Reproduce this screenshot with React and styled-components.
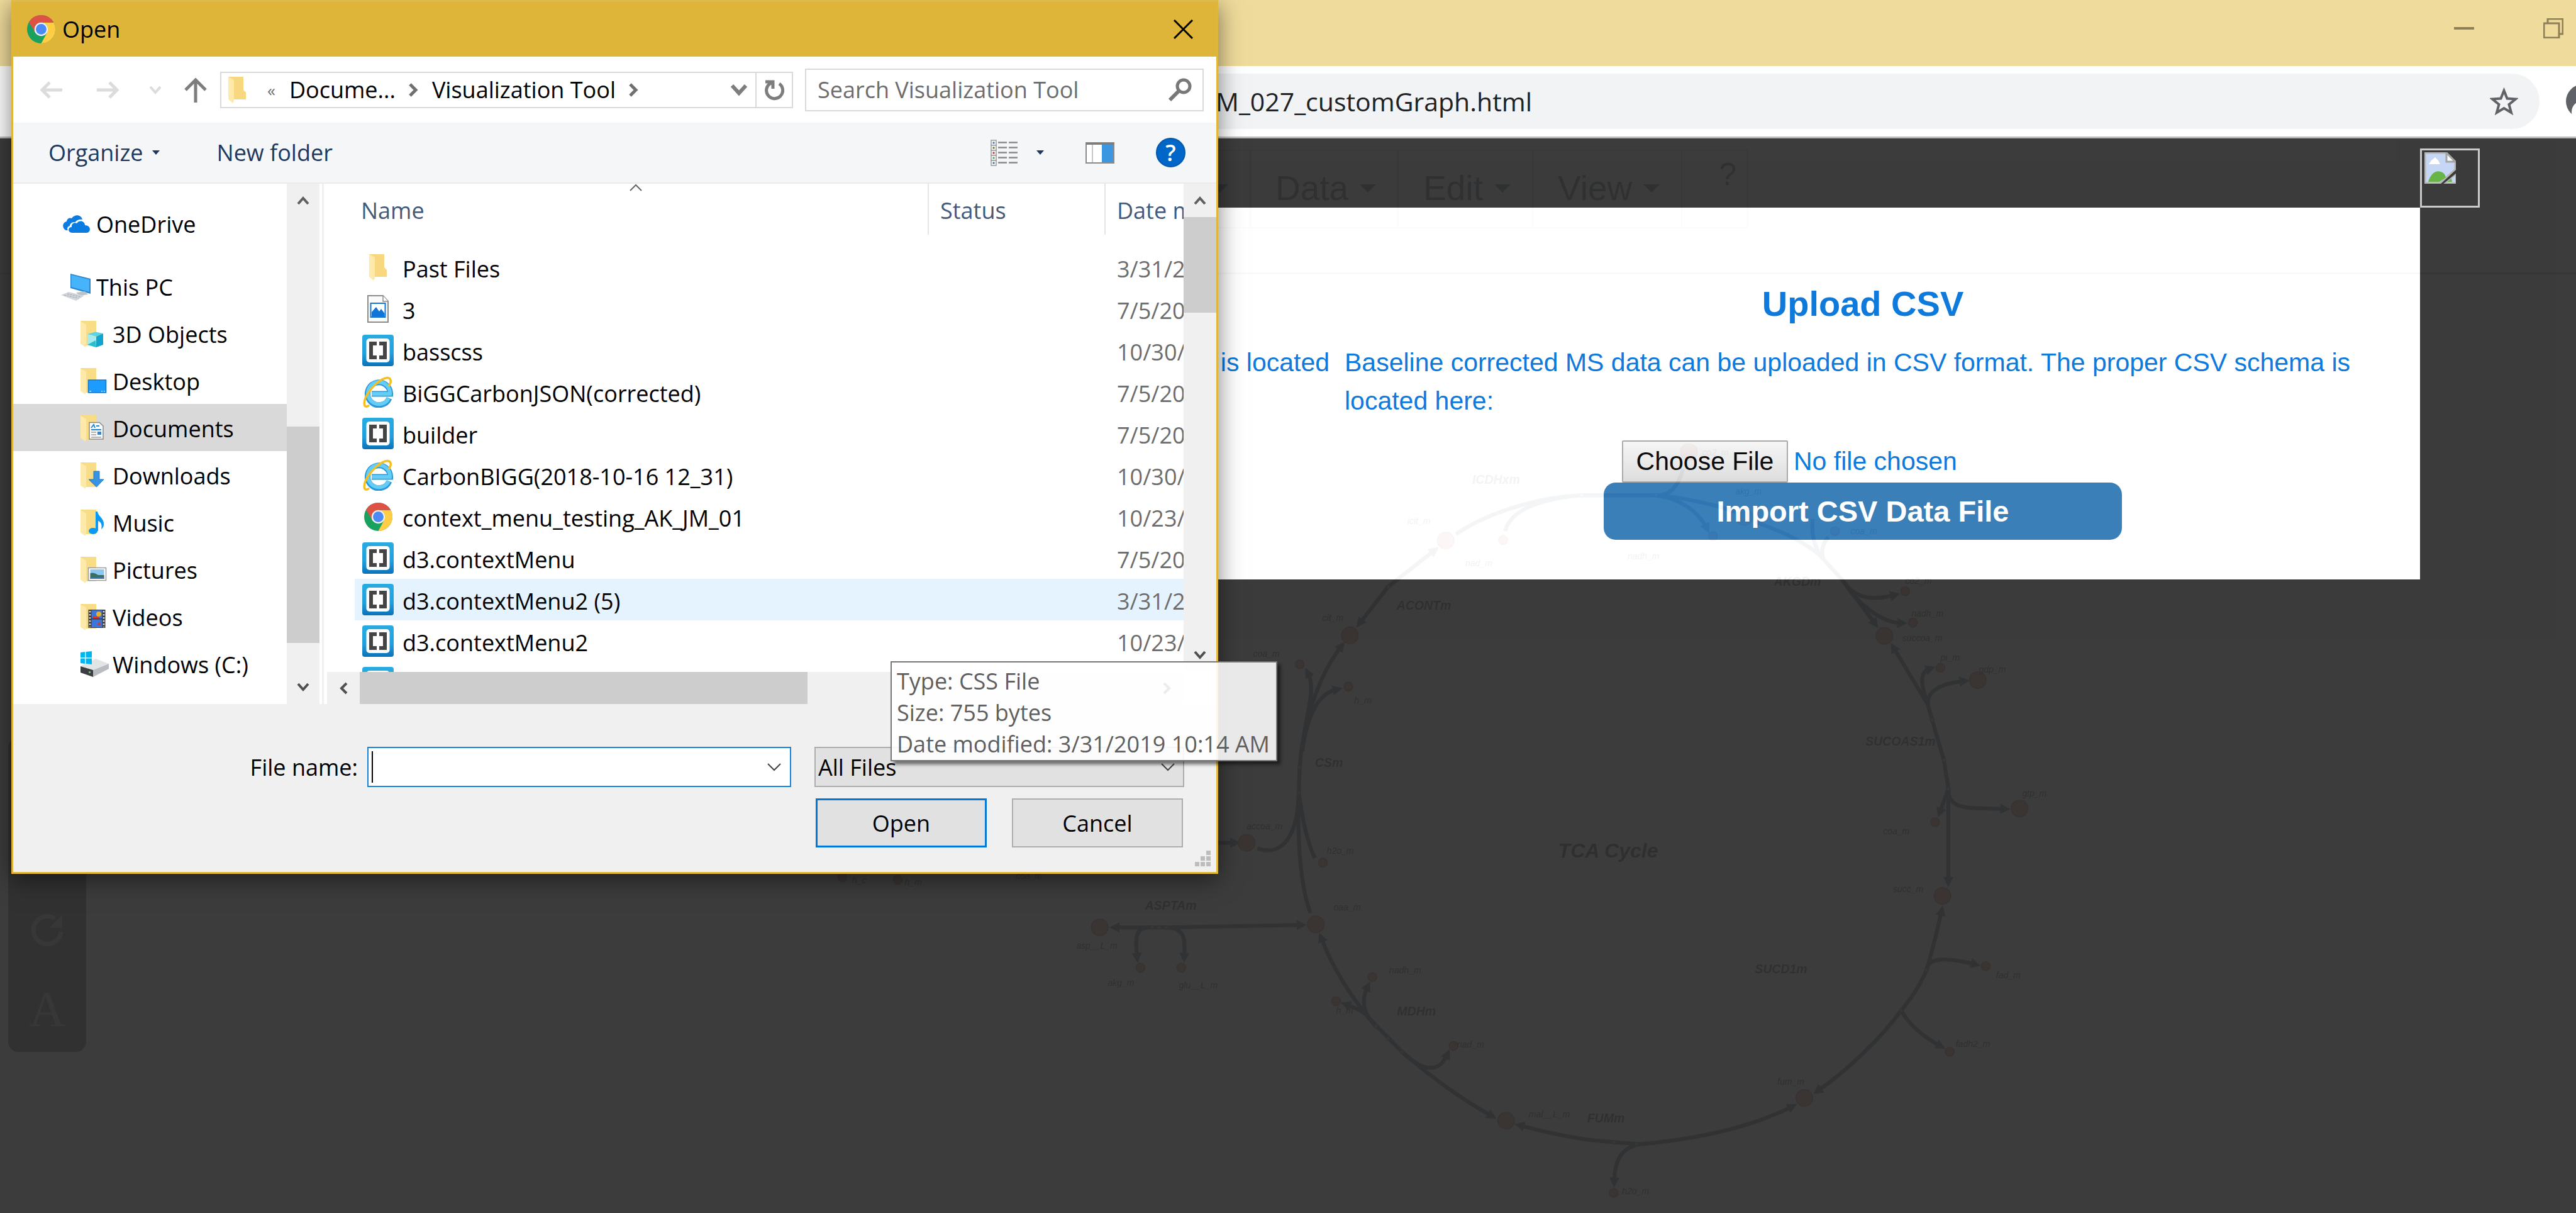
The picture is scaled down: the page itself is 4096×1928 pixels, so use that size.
import React from "react";
import styled, { createGlobalStyle, css } from "styled-components";

const UI = `"Open Sans", "Noto Sans", sans-serif`;
const WEB = `"Liberation Sans", Arial, sans-serif`;

const GlobalStyle = createGlobalStyle`
  *, *::before, *::after { box-sizing: border-box; }
  html, body { margin: 0; background: #ffffff; }
  body { font-family: ${UI}; font-size: 36px; color: #000; overflow: hidden; }
  button, input, select { font: inherit; color: inherit; margin: 0; }
  svg { display: block; flex: none; }
`;

/* ---------- browser window ---------- */

const Desktop = styled.div`
  position: relative;
  display: flex;
  flex-direction: column;
  min-height: 100vh;
  overflow: hidden;
`;

const TabStrip = styled.header`
  display: flex;
  justify-content: flex-end;
  align-items: center;
  gap: 110px;
  height: 105px;
  padding: 0 20px 16px 0;
  background: #efdb9b;
`;

const CaptionButton = styled.button`
  display: grid;
  place-items: center;
  padding: 0;
  border: 0;
  background: none;
`;

const Toolbar = styled.div`
  display: flex;
  align-items: center;
  gap: 42px;
  height: 115px;
  padding-left: 400px;
  background: #fff;
  border-bottom: 3px solid #b9b9b9;
  overflow: hidden;
`;

const Omnibox = styled.div`
  flex: 1;
  display: flex;
  align-items: center;
  height: 88px;
  padding: 0 34px 0 1533px;
  border-radius: 44px;
  background: #f1f3f4;
`;

const UrlInput = styled.input`
  flex: 1;
  min-width: 0;
  padding: 0;
  border: 0;
  outline: 0;
  background: none;
  font-size: 41px;
  color: #202124;
`;

const Avatar = styled.div`
  flex: none;
  width: 16px;
  height: 54px;
  overflow: hidden;
`;

const Page = styled.main`
  position: relative;
  flex: 1;
  display: flex;
  flex-direction: column;
  background: #fff;
  font-family: ${WEB};
`;

const PageHeader = styled.div`
  height: 216px;
  padding: 18px 0 0 1886px;
  border-bottom: 3px solid #b0b0b0;
`;

const MenuBar = styled.nav`
  display: inline-flex;
  height: 125px;
  border: 2px solid #c4c4c4;
`;

const MenuButton = styled.button`
  display: flex;
  align-items: center;
  gap: 18px;
  padding: 0 34px 3px 39px;
  border: 0;
  border-right: 2px solid #c4c4c4;
  background: none;
  font-size: 55px;
  color: #1b2a40;
`;

const HelpLink = styled.a`
  padding: 8px 17px 0 58px;
  font-size: 50px;
  color: #1b2a40;
  text-decoration: none;
`;

const Caret = styled.span`
  border: solid transparent;
  border-width: 13px 13px 0;
  border-top-color: currentColor;
`;

const Graph = styled.svg`
  position: absolute;
  left: 0;
  top: 0;
  width: 100%;
  height: 100%;
`;

const Palette = styled.div`
  position: absolute;
  left: 13px;
  top: 952px;
  width: 124px;
  display: flex;
  flex-direction: column;
  border-radius: 16px;
  background: #303030;
`;

const PaletteButton = styled.button`
  display: grid;
  place-items: center;
  height: 125px;
  padding: 0 0 12px;
  border: 0;
  background: none;
  color: #a0a0a0;
  font: 80px/1 "Liberation Serif", serif;
`;

/* ---------- upload overlay ---------- */

const Overlay = styled.div`
  position: absolute;
  inset: 0;
  display: flex;
  align-items: flex-start;
  padding: 16px 153px 0 404px;
  background: #313131;
  opacity: 0.95;
`;

const UploadPanel = styled.section`
  flex: 1;
  display: grid;
  grid-template-columns: 1fr 1fr;
  gap: 24px;
  margin-top: 94px;
  padding: 112px 62px 63px;
  background: #fff;
  color: #0273db;
  font-size: 41px;
  line-height: 61px;
`;

const UploadColumn = styled.div`
  display: flex;
  flex-direction: column;
`;

const PanelTitle = styled.h2`
  margin: 0 0 22px;
  min-height: 82px;
  font-size: 56px;
  line-height: 82px;
  text-align: center;
`;

const PanelText = styled.p`
  margin: 0 0 32px;
  min-height: 122px;
  text-align: ${(p) => p.$align || "left"};
`;

const LeadColumn = styled(UploadColumn)`
  padding-top: 104px;
`;

const FileInput = styled.input`
  width: 824px;
  height: 67px;
  margin-left: 441px;
  font-size: 41px;
  line-height: 61px;
  &::file-selector-button {
    width: 264px;
    height: 67px;
    margin: 0 9px 0 0;
    padding: 0;
    border: 2px solid #a6a6a6;
    border-radius: 2px;
    background: linear-gradient(#f6f6f6, #dcdcdc);
    font: inherit;
    color: #000;
  }
`;

const ImportButton = styled.button`
  align-self: center;
  width: 50%;
  height: 91px;
  padding: 0;
  border: 0;
  border-radius: 19px;
  background: #3179b6;
  color: #fff;
  font-size: 47px;
  font-weight: bold;
`;

const BrokenImage = styled.div`
  width: 95px;
  height: 94px;
  padding: 3px 4px;
  border: 3px solid #c8c8c8;
`;

/* ---------- file dialog ---------- */

const Dialog = styled.section`
  position: absolute;
  left: 18px;
  top: 0;
  width: 46.85%;
  display: flex;
  flex-direction: column;
  border: 3px solid #e0b638;
  border-top-color: #dfba4c;
  background: #fff;
  box-shadow: 0 8px 36px rgba(0, 0, 0, 0.5);
`;

const TitleBar = styled.header`
  display: flex;
  align-items: center;
  gap: 10px;
  height: 87px;
  padding: 0 37px 0 21px;
  background: #dfb539;
`;

const DialogTitle = styled.h1`
  flex: 1;
  margin: 0;
  font-size: 36px;
  font-weight: normal;
`;

const PlainButton = styled.button`
  display: flex;
  align-items: center;
  padding: 0;
  border: 0;
  background: none;
`;

const NavBar = styled.div`
  display: flex;
  align-items: center;
  height: 105px;
  padding: 0 20px 0 42px;
`;

const NavButtons = styled.div`
  display: flex;
  align-items: center;
  width: 287px;
`;

const NavSlot = styled(PlainButton)`
  width: ${(p) => p.$w}px;
`;

const AddressBar = styled.div`
  flex: 1;
  display: flex;
  align-items: center;
  height: 58px;
  border: 2px solid #d9d9d9;
  padding-left: 11px;
`;

const Crumb = styled(PlainButton)`
  margin-left: 22px;
  white-space: nowrap;
`;

const CrumbMark = styled.span`
  margin-left: 33px;
  font-size: 26px;
  line-height: 30px;
  color: #6d6d6d;
`;

const Chevron = styled.span`
  display: grid;
  margin-left: 20px;
`;

const RefreshButton = styled(PlainButton)`
  justify-content: center;
  width: 58px;
  height: 54px;
  margin-left: 12px;
  border-left: 2px solid #d9d9d9;
`;

const Spacer = styled.div`
  flex: 1;
`;

const SearchBox = styled.label`
  display: flex;
  align-items: center;
  width: 634px;
  height: 68px;
  margin-left: 19px;
  padding: 0 17px 0 18px;
  border: 2px solid #d9d9d9;
`;

const SearchInput = styled.input`
  flex: 1;
  min-width: 0;
  padding: 0;
  border: 0;
  outline: 0;
  background: none;
  &::placeholder { color: #6d6d6d; opacity: 1; }
`;

const CommandBar = styled.div`
  display: flex;
  align-items: center;
  height: 97px;
  padding: 0 49px 0 56px;
  border-bottom: 2px solid #e8eaec;
  background: #f5f6f8;
  color: #1e395b;
`;

const Command = styled(PlainButton)`
  gap: 14px;
  margin-right: ${(p) => p.$gap}px;
`;

const SmallCaret = styled.span`
  border: solid transparent;
  border-width: 7px 6px 0;
  border-top-color: #1e395b;
`;

const HelpBadge = styled(PlainButton)`
  justify-content: center;
  width: 47px;
  height: 47px;
  border-radius: 50%;
  border: 2px solid #0359ab;
  background: #0067c8;
  color: #fff;
  font-size: 36px;
  line-height: 40px;
  font-weight: 600;
`;

const Browser = styled.div`
  display: flex;
  height: 827px;
`;

const Tree = styled.nav`
  width: 435px;
  padding-top: 25px;
`;

const TreeItem = styled.a`
  display: flex;
  align-items: center;
  height: 75px;
  padding: 3px 0 0 ${(p) => (p.$nested ? 107 : 75)}px;
  margin-bottom: ${(p) => (p.$spaced ? 25 : 0)}px;
  background: ${(p) => (p.$selected ? "#d9d9d9" : "transparent")};
  color: #000;
  text-decoration: none;
`;

const TreeIcon = styled.span`
  display: flex;
  justify-content: ${(p) => (p.$nested ? "flex-start" : "center")};
  width: ${(p) => (p.$nested ? 51 : 50)}px;
  margin-right: ${(p) => (p.$nested ? 0 : 7)}px;
`;

const VScroll = styled.div`
  display: flex;
  flex-direction: column;
  align-items: center;
  flex: none;
  width: 52px;
  background: #f0f0f0;
`;

const ScrollCorner = styled.div`
  width: 100%;
  height: 51px;
  background: #fff;
`;

const HScroll = styled.div`
  display: flex;
  align-items: center;
  height: 51px;
  background: #f0f0f0;
`;

const ScrollArrow = styled(PlainButton)`
  flex: none;
  justify-content: center;
  width: 52px;
  height: 53px;
`;

const Thumb = styled.div`
  background: #cdcdcd;
  ${(p) =>
    p.$horizontal
      ? css`width: ${p.$size}px; height: 100%;`
      : css`width: 100%; height: ${p.$size}px; margin-top: ${p.$offset || 0}px;`}
`;

const PaneSplit = styled.div`
  width: 12px;
  border-left: 4px solid #fff;
  border-right: 5px solid #fff;
  background: #f0f0f0;
`;

const FilePane = styled.div`
  flex: 1;
  min-width: 0;
  display: flex;
  flex-direction: column;
`;

const FileArea = styled.div`
  flex: 1;
  min-height: 0;
  overflow: hidden;
`;

const FileTable = styled.table`
  width: 100%;
  table-layout: fixed;
  border-collapse: separate;
  border-spacing: 0;
  padding-left: 44px;
  line-height: 48px;
`;

const HeadCell = styled.th`
  position: relative;
  width: ${(p) => p.$w || "auto"};
  height: 81px;
  padding: 4px 0 0 ${(p) => p.$pad || 18}px;
  border-right: ${(p) => (p.$last ? 0 : 2)}px solid #e3e5e8;
  font-weight: normal;
  text-align: left;
  white-space: nowrap;
  overflow: hidden;
  color: #44597a;
`;

const SortMark = styled.span`
  position: absolute;
  left: 48%;
  top: 0;
`;

const GapRow = styled.tr`
  height: 19px;
`;

const FileRow = styled.tr`
  height: 66px;
  background: ${(p) => (p.$hover ? "#e5f3ff" : "transparent")};
`;

const FileCell = styled.td`
  padding: ${(p) => (p.$name ? 0 : 5)}px 0 0 ${(p) => (p.$name ? 12 : 18)}px;
  color: ${(p) => (p.$name ? "#000" : "#6d6d6d")};
  white-space: nowrap;
  overflow: hidden;
`;

const FileName = styled.span`
  display: flex;
  align-items: center;
  height: 54px;
  gap: 14px;
`;

const FileLabel = styled.span`
  padding-top: 5px;
`;

const IconBox = styled.span`
  display: flex;
  width: 50px;
  justify-content: center;
`;

const Footer = styled.form`
  display: grid;
  grid-template-columns: 1fr 588px;
  column-gap: 37px;
  row-gap: 18px;
  padding: 68px 51px 39px 0;
  background: #f0f0f0;
`;

const NameField = styled.div`
  display: flex;
  align-items: center;
  justify-content: flex-end;
  gap: 15px;
`;

const Combo = styled.div`
  display: flex;
  align-items: center;
  width: 674px;
  height: 64px;
  padding: 0 14px 0 5px;
  border: 2px solid #1883d7;
  background: #fff;
`;

const CaretBar = styled.span`
  width: 2px;
  height: 50px;
  background: #000;
`;

const ComboInput = styled.input`
  flex: 1;
  min-width: 0;
  padding: 0;
  border: 0;
  outline: 0;
`;

const TypeField = styled.div`
  display: grid;
  align-items: center;
  > * { grid-area: 1 / 1; }
  svg { justify-self: end; margin-right: 15px; pointer-events: none; }
`;

const TypeSelect = styled.select`
  width: 100%;
  height: 64px;
  padding: 0 4px;
  border: 2px solid #adadad;
  border-radius: 0;
  background: #e1e1e1;
  appearance: none;
`;

const Actions = styled.div`
  grid-column: 2;
  display: grid;
  grid-template-columns: 1fr 1fr;
  gap: 40px;
  padding: 0 2px;
`;

const ActionButton = styled.button`
  height: 78px;
  padding: 0;
  border: ${(p) => (p.$primary ? "3px solid #0078d7" : "2px solid #adadad")};
  background: #e1e1e1;
`;

const Grip = styled.div`
  position: absolute;
  right: 8px;
  bottom: 8px;
`;

const Tooltip = styled.div`
  position: absolute;
  left: 1416px;
  top: 1051px;
  padding: 5px 10px 0 8px;
  border: 2px solid #767676;
  background: rgba(255, 255, 255, 0.89);
  box-shadow: 5px 5px 5px rgba(0, 0, 0, 0.5);
  color: #5f5f5f;
  line-height: 50px;
  white-space: nowrap;
  font-size: 36px;
`;

/* ---------- icons ---------- */

const ChromeIcon = ({ size = 47 }) => (
  <svg width={size} height={size} viewBox="0 0 48 48">
    <circle cx="24" cy="24" r="23" fill="#1aa15f" />
    <path d="M24 13H44.200A23 23 0 0 1 24 47L33.500 29.500A11 11 0 0 0 24 13z" fill="#ffce44" />
    <path d="M24 13H44.200A23 23 0 0 0 4.100 12.500L14.500 29.500A11 11 0 0 1 24 13z" fill="#de5246" />
    <circle cx="24" cy="24" r="11" fill="#f3f3f3" />
    <circle cx="24" cy="24" r="8.600" fill="#4c8bf5" />
  </svg>
);

const Stroke = ({ w, h, d, color = "#7d7d7d", sw = 5 }) => (
  <svg width={w} height={h} viewBox={`0 0 ${w} ${h}`} fill="none" stroke={color} strokeWidth={sw}>
    <path d={d} />
  </svg>
);

const FolderShape = () => (
  <>
    <path d="M0 0H25V39H4L0 36z" fill="#f5d477" />
    <path d="M4 0H25V39H8z" fill="#f8dc86" />
    <path d="M0 0L9 6V38L7.500 42L0 36z" fill="#fde9a9" />
  </>
);

const FolderIcon = () => (
  <svg width="29" height="42" viewBox="0 0 29 42">
    <path d="M0 0H24V21L28 25V36H6z" fill="#f7d880" />
    <path d="M0 0L9 5V38L7.500 42L0 36z" fill="#fde9a9" />
  </svg>
);

const overlays = {
  objects: (
    <g>
      <path d="M11 21L24 17.500L36 20L26 25z" fill="#5fd3e0" />
      <path d="M11 21L25 25V42L11 38z" fill="#a5ecf0" />
      <path d="M25 25L36 20V38L25 42z" fill="#12a3cf" />
      <path d="M11 38L24 31L25 42z" fill="#24c0cf" />
    </g>
  ),
  desktop: (
    <g>
      <rect x="12.500" y="19" width="28" height="20" fill="#1c9cff" stroke="#1474cc" strokeWidth="1.500" />
      <path d="M14 37h25" stroke="#bfe3ff" strokeWidth="1.500" strokeDasharray="3 16 2 2" />
    </g>
  ),
  documents: (
    <g>
      <path d="M14 11.500H30L36 17V38H14z" fill="#fbfbfb" stroke="#8a8a8a" strokeWidth="1.500" />
      <path d="M17 20l4-5l2 5M25 17h5M17 23h16" stroke="#1a8ad4" strokeWidth="2" fill="none" />
      <path d="M17 27h8M17 31h8M17 35h16" stroke="#9a9a9a" strokeWidth="1.500" />
      <rect x="27" y="26" width="6" height="5" fill="#3b86c0" />
    </g>
  ),
  downloads: <path d="M21 14H30V27H37L25.500 39L13 27H21z" fill="#3794e4" stroke="#2479c4" />,
  music: (
    <g fill="#0a99f5">
      <ellipse cx="20" cy="34" rx="7" ry="5" />
      <path d="M24 3H27C28 11 38 14 37 24C37 27 35 30 33 31C35 24 32 19 28 18V34H24z" />
    </g>
  ),
  pictures: (
    <g>
      <rect x="12.500" y="17.500" width="28" height="20" fill="#fff" stroke="#9b9b9b" strokeWidth="1.500" />
      <rect x="15.500" y="20" width="22" height="15" fill="#8cc6f2" />
      <path d="M15.500 26Q22 24 28 29L37.500 29V35H15.500z" fill="#3d6e63" />
      <path d="M15.500 33H37.500V35H15.500z" fill="#3a77ad" />
    </g>
  ),
  videos: (
    <g>
      <rect x="12.500" y="9" width="27" height="29" fill="#3a3a3a" />
      <rect x="17.500" y="10" width="17" height="13" fill="#3f74d8" />
      <rect x="17.500" y="24.500" width="17" height="12.500" fill="#3f74d8" />
      <circle cx="29" cy="16" r="4" fill="#e5b32a" />
      <path d="M19 20h11v3H19zM26 34l4-6 3 6z" fill="#c8402d" />
      <path d="M15 11v26M37 11v26" stroke="#ddd" strokeWidth="2.500" strokeDasharray="2.500 2.500" />
    </g>
  ),
};

const KnownFolder = ({ kind }) => (
  <svg width="42" height="42" viewBox="0 0 42 42">
    <FolderShape />
    {overlays[kind]}
  </svg>
);

const OneDriveIcon = () => (
  <svg width="44" height="28" viewBox="0 0 44 28" fill="#0a7be0">
    <path d="M9 24H6C0 22 -1 12 7 10C8 4 13 4 15 5C20 -2 30 -1 32 7C26 6 22 9 21 11C13 10 12 16 12 17C8 18 7 22 9 24z" />
    <path d="M15 28C8 27 9 19 15 19C14 13 20 11 23 13C27 7 36 9 36 16C46 16 46 27 39 28z" />
  </svg>
);

const PcIcon = () => (
  <svg width="48" height="43" viewBox="0 0 48 43">
    <path d="M15 0L47 8V32L15 23z" fill="#2f87cf" />
    <path d="M16.500 2L45 9.500V29L16.500 21z" fill="#45b4fb" />
    <path d="M24 30L38 28L43 33L30 35z" fill="#bcc2c8" />
    <path d="M0 34L12 29L37 35L24 43z" fill="#d3d7dc" />
    <path d="M5 34L28 39M10 32L32 37" stroke="#9ea5ad" strokeDasharray="3 1.500" />
  </svg>
);

const DriveIcon = () => (
  <svg width="46" height="42" viewBox="0 0 46 42">
    <path d="M0 24L24 12L45 20L20 30z" fill="#e2e4e6" />
    <path d="M20 30L45 20V28L20 41z" fill="#b9bcc0" />
    <path d="M0 24L20 30V41L0 34z" fill="#3c3f42" />
    <rect x="13" y="32" width="3" height="3" fill="#3fcf4a" />
    <path d="M0 2L7 1V10H0zM8.500 1L18 0V10H8.500zM0 11.500H7V20L0 19zM8.500 11.500H18V21L8.500 20z" fill="#00b6f1" />
  </svg>
);

const BracketsIcon = () => (
  <svg width="50" height="50" viewBox="0 0 50 50">
    <defs>
      <linearGradient id="brk" x2="0" y2="1">
        <stop offset="0" stopColor="#29abe2" />
        <stop offset="0.600" stopColor="#1f9fdb" />
        <stop offset="1" stopColor="#0a72ba" />
      </linearGradient>
    </defs>
    <rect width="50" height="50" rx="4" fill="url(#brk)" />
    <rect x="6.500" y="6" width="37" height="38" rx="5" fill="#fdfdfd" />
    <path d="M11 11H23V17H17V33H23V39H11zM39 11H27V17H33V33H27V39H39z" fill="#444" />
  </svg>
);

const IeIcon = () => (
  <svg width="48" height="50" viewBox="0 0 48 50" fill="none">
    <path d="M42 35A18 18 0 1 1 43.500 28H14" stroke="#2a97d8" strokeWidth="9" />
    <path d="M41 35A17.500 17.500 0 1 1 43 28H14" stroke="#63cdf7" strokeWidth="6" />
    <path d="M10 46C0 54 -1 38 11 23C24 6 41 -3 44 6C45 9 43 13 41 16" stroke="#f6bf1c" strokeWidth="3.500" />
  </svg>
);

const PictureFileIcon = () => (
  <svg width="34" height="44" viewBox="0 0 34 44">
    <path d="M1 1H25L33 10V43H1z" fill="#fafafa" stroke="#8c8c8c" strokeWidth="2" />
    <path d="M25 1V10H33" fill="#fff" stroke="#8c8c8c" strokeWidth="1.500" />
    <rect x="5.500" y="13" width="23" height="22" fill="#fff" stroke="#1379d4" strokeWidth="2" />
    <path d="M7 34V27L14 19L19 26L22 22L27.500 29V34z" fill="#0f76d8" />
  </svg>
);

const DetailsIcon = () => (
  <svg width="43" height="42" viewBox="0 0 43 42">
    {["#3b78b5", "#5f7a3a", "#c0392b", "#5aa05a", "#3b78b5"].map((c, i) => (
      <g key={i} transform={`translate(0 ${i * 8})`}>
        <rect x="1" y="1" width="8" height="8" fill="#fff" stroke="#9a9a9a" strokeWidth="1.500" />
        <rect x="3.500" y="3.500" width="3" height="3" fill={c} />
        <path d="M12 4.500H26M29 4.500H43" stroke="#8a8a8a" strokeWidth="2.500" />
      </g>
    ))}
  </svg>
);

const PaneIcon = () => (
  <svg width="46" height="34" viewBox="0 0 46 34">
    <rect x="1" y="1" width="44" height="32" fill="#fff" stroke="#8a8a8a" strokeWidth="2" />
    <path d="M1 2.500H45" stroke="#7d7d7d" strokeWidth="3" />
    <path d="M11 4V32" stroke="#b5b5b5" strokeWidth="1.500" />
    <rect x="26" y="4" width="18" height="28" fill="#3c96e0" />
  </svg>
);

const BrokenIcon = () => (
  <svg width="50" height="50" viewBox="0 0 50 50">
    <path d="M1 1H35L49 15V27L25 49H1z" fill="#c3d5f6" stroke="#b4b4b4" strokeWidth="3" />
    <path d="M35 1V15H49z" fill="#fff" stroke="#a0a0a0" strokeWidth="3" />
    <path d="M7 19L11 13L17 8L22 13L25 19z" fill="#fff" />
    <path d="M6 47C10 34 18 28 26 31C30 32 33 35 34 40L24 47z" fill="#5fb13e" />
    <path d="M50 35V49H33z" fill="#c3d5f6" stroke="#b4b4b4" strokeWidth="2" />
    <path d="M36 47L43 42L44 47z" fill="#5fb13e" />
  </svg>
);

/* ---------- metabolic map ---------- */

const bigNodes = [
  [2942, 1100], [2747, 1293], [2537, 1715], [2678, 1881], [2238, 1887], [3065, 2280], [3672, 2234],
  [3953, 1823], [4110, 1645], [4025, 1384], [3835, 1294], [3550, 1052], [3437, 920],
];

const smallNodes = [
  [3059, 1099], [2645, 1352], [2744, 1397], [2692, 1755], [2321, 1969], [2404, 1969], [2793, 1988],
  [2719, 2037], [2958, 2128], [3284, 2427], [3968, 2140], [4041, 1966], [3938, 1673], [3949, 1359],
  [3893, 1267], [3877, 1203], [3486, 1091], [3734, 1081], [1714, 1785], [1827, 1790],
];

const joints = [
  [2645, 1561], [2643, 1613], [2345, 1887], [2359, 1887], [2373, 1887], [2800, 2088], [2825, 2113],
  [2853, 2140], [3284, 2324], [3330, 2328], [3869, 2056], [3921, 1973], [3965, 1605], [3956, 1547],
  [3932, 1465], [3219, 1008], [3370, 1008], [2825, 1194],
];

const plainEdges = [
  "M2559 1726C2600 1742 2641 1715 2643 1613",
  "M2643 1613C2650 1660 2658 1710 2676 1746",
  "M2643 1613C2640 1700 2645 1800 2667 1858",
  "M2963 1087C3040 1035 3150 1010 3219 1008H3370C3430 1012 3500 1030 3532 1042",
  "M3063 1081C3075 1035 3140 1015 3219 1008",
  "M3370 1008C3410 1010 3420 970 3425 955",
  "M3689 1056C3685 1095 3695 1115 3708 1135",
  "M3721 1093C3710 1105 3706 1120 3710 1138",
];

const arrowEdges = [
  "M2643 1613L2645 1561C2650 1480 2680 1380 2729 1316",
  "M2650 1529C2654 1460 2680 1405 2662 1370",
  "M2650 1529C2660 1460 2680 1412 2720 1403",
  "M2345 1887C2310 1885 2310 1905 2314 1947",
  "M2373 1887C2415 1888 2411 1915 2410 1947",
  "M2800 2088C2770 2060 2772 2030 2783 2008",
  "M2800 2088C2780 2058 2762 2052 2740 2044",
  "M2853 2140C2900 2185 2930 2180 2945 2146",
  "M3337 2328C3300 2335 3286 2360 3285 2404",
  "M3869 2056C3885 2085 3915 2110 3948 2128",
  "M3921 1973C3922 1945 3970 1950 4019 1962",
  "M3965 1605L3948 1652",
  "M3965 1605C3965 1652 4010 1643 4079 1646",
  "M3923 1433C3905 1380 3910 1367 3927 1361",
  "M3923 1433C3922 1400 3960 1390 3996 1386",
  "M3573 1063C3640 1085 3690 1115 3708 1135L3750 1181L3815 1268",
  "M3750 1181C3775 1220 3810 1222 3855 1211",
  "M3750 1181C3780 1230 3830 1267 3869 1268",
  "M3370 1008C3420 1015 3455 1040 3473 1074",
  "M2478 1715H2512",
];

const twoWayEdges = [
  "M2270 1887H2373L2647 1882",
  "M2689 1909C2715 1975 2745 2020 2786 2072L2853 2140C2910 2190 2980 2240 3035 2270",
  "M3094 2290C3150 2305 3220 2320 3284 2324L3337 2328C3450 2318 3560 2295 3646 2252",
  "M3700 2219C3760 2178 3830 2110 3869 2056C3890 2030 3905 2010 3921 1973C3932 1935 3942 1895 3951 1855",
  "M3965 1793V1605L3956 1547L3932 1465L3923 1433L3854 1319",
  "M2768 1267L2825 1194L2918 1121",
];

const metabolites = [
  ["icit_m", 2864, 1067], ["nad_m", 2982, 1152], ["nadh_m", 3312, 1138], ["cit_m", 2691, 1264],
  ["coa_m", 2550, 1337], ["h_m", 2756, 1431], ["accoa_m", 2537, 1687], ["h2o_m", 2700, 1737],
  ["oaa_m", 2714, 1853], ["asp__L_m", 2190, 1930], ["akg_m", 2254, 2006], ["glu__L_m", 2399, 2011],
  ["nadh_m", 2827, 1980], ["h_m", 2719, 2062], ["nad_m", 2965, 2132], ["mal__L_m", 3111, 2273],
  ["fum_m", 3617, 2207], ["h2o_m", 3301, 2429], ["fadh2_m", 3980, 2130], ["fad_m", 4062, 1990],
  ["succ_m", 3852, 1815], ["coa_m", 3832, 1698], ["gtp_m", 4115, 1621], ["gdp_m", 4027, 1368],
  ["pi_m", 3949, 1344], ["succoa_m", 3871, 1304], ["nadh_m", 3890, 1255], ["co2_m", 3877, 1188],
  ["coa_m", 3766, 1087], ["akg_m", 3531, 1006], ["co2_m", 3464, 927], ["h_c", 1734, 1798],
  ["h_m", 1841, 1801], ["coa_m", 2067, 1789],
];

const reactions = [
  ["ICDHxm", 2996, 985], ["ACONTm", 2842, 1240], ["CSm", 2676, 1560], ["ASPTAm", 2330, 1851],
  ["MDHm", 2843, 2066], ["FUMm", 3230, 2284], ["SUCD1m", 3571, 1980], ["SUCOAS1m", 3796, 1517],
  ["AKGDm", 3610, 1192],
];

const EDGE = "#26436b";

const MetabolicMap = () => (
  <Graph viewBox="0 282 5242 2186" preserveAspectRatio="xMinYMin meet">
    <defs>
      <marker id="tip" viewBox="0 0 10 10" refX="4" refY="5" markerWidth="2.600" markerHeight="2.600" orient="auto-start-reverse">
        <path d="M0 0L10 5L0 10z" fill={EDGE} />
      </marker>
    </defs>
    <g fill="none" stroke={EDGE} strokeWidth="8">
      {plainEdges.map((d) => <path key={d} d={d} />)}
      {arrowEdges.map((d) => <path key={d} d={d} markerEnd="url(#tip)" />)}
      {twoWayEdges.map((d) => <path key={d} d={d} markerStart="url(#tip)" markerEnd="url(#tip)" />)}
    </g>
    <g fill="#fff" stroke={EDGE} strokeWidth="2">
      {joints.map(([x, y]) => <circle key={`${x}-${y}`} cx={x} cy={y} r="4" opacity="0.500" />)}
    </g>
    <g fill="#d06a50" stroke="#93432a" strokeWidth="2">
      {bigNodes.map(([x, y]) => <circle key={`${x}-${y}`} cx={x} cy={y} r="17" />)}
      {smallNodes.map(([x, y]) => <circle key={`${x}-${y}`} cx={x} cy={y} r="9" />)}
    </g>
    <g fontFamily="Liberation Sans, Arial, sans-serif" fontStyle="italic">
      <g fontSize="18" fill="#000">
        {metabolites.map(([t, x, y]) => <text key={`${x}-${y}`} x={x} y={y}>{t}</text>)}
      </g>
      <g fontSize="25" fontWeight="bold" fill="#18183a">
        {reactions.map(([t, x, y]) => <text key={t} x={x} y={y}>{t}</text>)}
      </g>
      <text x="3171" y="1745" fontSize="41" fontWeight="bold" fill="#000">TCA Cycle</text>
    </g>
  </Graph>
);

/* ---------- data ---------- */

const treeItems = [
  { label: "3D Objects", kind: "objects" },
  { label: "Desktop", kind: "desktop" },
  { label: "Documents", kind: "documents", selected: true },
  { label: "Downloads", kind: "downloads" },
  { label: "Music", kind: "music" },
  { label: "Pictures", kind: "pictures" },
  { label: "Videos", kind: "videos" },
];

const files = [
  ["Past Files", FolderIcon, "3/31/2019"],
  ["3", PictureFileIcon, "7/5/2018"],
  ["basscss", BracketsIcon, "10/30/2018"],
  ["BiGGCarbonJSON(corrected)", IeIcon, "7/5/2018"],
  ["builder", BracketsIcon, "7/5/2018"],
  ["CarbonBIGG(2018-10-16 12_31)", IeIcon, "10/30/2018"],
  ["context_menu_testing_AK_JM_01", ChromeIcon, "10/23/2018"],
  ["d3.contextMenu", BracketsIcon, "7/5/2018"],
  ["d3.contextMenu2 (5)", BracketsIcon, "3/31/2019"],
  ["d3.contextMenu2", BracketsIcon, "10/23/2018"],
  ["", BracketsIcon, ""],
];

const Up = () => <Stroke w={20} h={15} d="M2 13L10 4L18 13" color="#606060" sw={4} />;
const Down = () => <Stroke w={20} h={15} d="M2 2L10 11L18 2" color="#505050" sw={4} />;
const Drop = () => <Stroke w={22} h={14} d="M1 2L11 12L21 2" color="#444" sw={2} />;
const CrumbArrow = () => (
  <Chevron><Stroke w={16} h={22} d="M3 2L12 11L3 20" color="#707070" sw={5} /></Chevron>
);

function FileDialog() {
  return (
    <Dialog role="dialog" aria-label="Open">
      <TitleBar>
        <ChromeIcon />
        <DialogTitle>Open</DialogTitle>
        <PlainButton aria-label="Close">
          <Stroke w={31} h={31} d="M1 1L30 30M30 1L1 30" color="#000" sw={3} />
        </PlainButton>
      </TitleBar>

      <NavBar>
        <NavButtons>
          <NavSlot $w={91} aria-label="Back"><Stroke w={36} h={28} d="M36 14H4M16 2L4 14L16 26" color="#dcdcdc" /></NavSlot>
          <NavSlot $w={83} aria-label="Forward"><Stroke w={36} h={28} d="M0 14H32M20 2L32 14L20 26" color="#dcdcdc" /></NavSlot>
          <NavSlot $w={56} aria-label="Recent locations"><Stroke w={20} h={14} d="M2 2L10 11L18 2" color="#dcdcdc" sw={4} /></NavSlot>
          <NavSlot $w={57} aria-label="Up"><Stroke w={36} h={40} d="M18 40V4M2 20L18 4L34 20" /></NavSlot>
        </NavButtons>
        <AddressBar>
          <FolderIcon />
          <CrumbMark>«</CrumbMark>
          <Crumb>Docume...</Crumb>
          <CrumbArrow />
          <Crumb>Visualization Tool</Crumb>
          <CrumbArrow />
          <Spacer />
          <PlainButton aria-label="Previous locations"><Stroke w={28} h={20} d="M3 3L14 15L25 3" sw={6} /></PlainButton>
          <RefreshButton aria-label="Refresh">
            <Stroke w={33} h={34} d="M25 7A13 13 0 1 1 12 6M3 4H15V15" sw={5} />
          </RefreshButton>
        </AddressBar>
        <SearchBox>
          <SearchInput placeholder="Search Visualization Tool" aria-label="Search Visualization Tool" />
          <svg width="38" height="38" viewBox="0 0 38 38" fill="none" stroke="#787878">
            <circle cx="25" cy="13" r="10" strokeWidth="5" />
            <path d="M18 20L3 35" strokeWidth="6" />
          </svg>
        </SearchBox>
      </NavBar>

      <CommandBar>
        <Command $gap={91}>Organize <SmallCaret /></Command>
        <Command>New folder</Command>
        <Spacer />
        <Command $gap={30} aria-label="View details"><DetailsIcon /></Command>
        <Command $gap={66} aria-label="More view options"><SmallCaret /></Command>
        <Command $gap={66} aria-label="Preview pane"><PaneIcon /></Command>
        <HelpBadge aria-label="Help">?</HelpBadge>
      </CommandBar>

      <Browser>
        <Tree aria-label="Folders">
          <TreeItem href="#onedrive" $spaced><TreeIcon><OneDriveIcon /></TreeIcon>OneDrive</TreeItem>
          <TreeItem href="#this-pc"><TreeIcon><PcIcon /></TreeIcon>This PC</TreeItem>
          {treeItems.map((t) => (
            <TreeItem key={t.kind} href={`#${t.kind}`} $nested $selected={t.selected}>
              <TreeIcon $nested><KnownFolder kind={t.kind} /></TreeIcon>{t.label}
            </TreeItem>
          ))}
          <TreeItem href="#windows" $nested><TreeIcon $nested><DriveIcon /></TreeIcon>Windows (C:)</TreeItem>
        </Tree>
        <VScroll>
          <ScrollArrow aria-label="Scroll up"><Up /></ScrollArrow>
          <Thumb $size={344} $offset={333} />
          <Spacer />
          <ScrollArrow aria-label="Scroll down"><Down /></ScrollArrow>
        </VScroll>
        <PaneSplit />
        <FilePane>
          <FileArea>
            <FileTable>
              <thead>
                <tr>
                  <HeadCell $pad={10}>Name<SortMark><Stroke w={20} h={12} d="M1 11L10 2L19 11" color="#666" sw={2} /></SortMark></HeadCell>
                  <HeadCell $w="281px">Status</HeadCell>
                  <HeadCell $w="124px" $last>Date modified</HeadCell>
                </tr>
              </thead>
              <tbody>
                <GapRow />
                {files.map(([name, Icon, date], i) => (
                  <FileRow key={i} $hover={i === 8}>
                    <FileCell $name>
                      <FileName><IconBox><Icon /></IconBox><FileLabel>{name}</FileLabel></FileName>
                    </FileCell>
                    <FileCell />
                    <FileCell>{date}</FileCell>
                  </FileRow>
                ))}
              </tbody>
            </FileTable>
          </FileArea>
          <HScroll>
            <ScrollArrow aria-label="Scroll left"><Stroke w={14} h={20} d="M12 2L4 10L12 18" color="#505050" sw={4} /></ScrollArrow>
            <Thumb $horizontal $size={712} />
            <Spacer />
            <ScrollArrow aria-label="Scroll right"><Stroke w={14} h={20} d="M2 2L10 10L2 18" color="#505050" sw={4} /></ScrollArrow>
          </HScroll>
        </FilePane>
        <VScroll>
          <ScrollArrow aria-label="Scroll up"><Up /></ScrollArrow>
          <Thumb $size={152} />
          <Spacer />
          <ScrollArrow aria-label="Scroll down"><Down /></ScrollArrow>
          <ScrollCorner />
        </VScroll>
      </Browser>

      <Footer onSubmit={(e) => e.preventDefault()}>
        <NameField>
          <label htmlFor="file-name">File name:</label>
          <Combo>
            <CaretBar />
            <ComboInput id="file-name" />
            <PlainButton type="button" aria-label="Recent names"><Drop /></PlainButton>
          </Combo>
        </NameField>
        <TypeField>
          <TypeSelect aria-label="File type"><option>All Files</option></TypeSelect>
          <Drop />
        </TypeField>
        <Actions>
          <ActionButton $primary>Open</ActionButton>
          <ActionButton type="button">Cancel</ActionButton>
        </Actions>
      </Footer>
      <Grip>
        <svg width="26" height="26" viewBox="0 0 26 26" fill="#bdbdbd">
          <path d="M18 0h7v7h-7zM18 9h7v7h-7zM18 18h7v7h-7zM9 9h7v7h-7zM9 18h7v7h-7zM0 18h7v7h-7z" />
        </svg>
      </Grip>
    </Dialog>
  );
}

export default function App() {
  return (
    <Desktop>
      <GlobalStyle />
      <TabStrip>
        <CaptionButton aria-label="Minimize"><Stroke w={32} h={4} d="M0 2H32" color="#8d8057" sw={4} /></CaptionButton>
        <CaptionButton aria-label="Restore"><Stroke w={32} h={32} d="M1 8H25V31H1zM7 8V1H31V25H25" color="#8d8057" sw={3} /></CaptionButton>
      </TabStrip>
      <Toolbar>
        <Omnibox>
          <UrlInput aria-label="Address" defaultValue="M_027_customGraph.html" />
          <svg width="45" height="45" viewBox="0 0 45 45" fill="none" stroke="#5f6368" strokeWidth="4">
            <path d="M22.500 5L27.500 17.500L41 18.500L30.500 27L34 40L22.500 33L11 40L14.500 27L4 18.500L17.500 17.500z" />
          </svg>
        </Omnibox>
        <Avatar>
          <svg width="54" height="54" viewBox="0 0 54 54">
            <circle cx="27" cy="27" r="27" fill="#5f6368" />
            <circle cx="27" cy="44" r="18" fill="#fff" />
          </svg>
        </Avatar>
      </Toolbar>
      <Page>
        <PageHeader>
          <MenuBar>
            <MenuButton aria-label="Map"><Caret /></MenuButton>
            <MenuButton>Data<Caret /></MenuButton>
            <MenuButton>Edit<Caret /></MenuButton>
            <MenuButton>View<Caret /></MenuButton>
            <HelpLink href="#help">?</HelpLink>
          </MenuBar>
        </PageHeader>
        <MetabolicMap />
        <Palette>
          <PaletteButton aria-label="Zoom to fit" />
          <PaletteButton aria-label="Redo" />
          <PaletteButton aria-label="Rotate">
            <svg width="56" height="56" viewBox="0 0 56 56" fill="none" stroke="#a0a0a0" strokeWidth="7">
              <path d="M50 30A22 22 0 1 1 40 9" />
              <path d="M52 3V24H31z" fill="#a0a0a0" stroke="none" />
            </svg>
          </PaletteButton>
          <PaletteButton>A</PaletteButton>
        </Palette>
        <Overlay>
          <UploadPanel>
            <LeadColumn>
              <PanelText $align="right">is located</PanelText>
            </LeadColumn>
            <UploadColumn>
              <PanelTitle>Upload CSV</PanelTitle>
              <PanelText>
                Baseline corrected MS data can be uploaded in CSV format. The proper CSV schema is located here:
              </PanelText>
              <FileInput type="file" aria-label="CSV file" />
              <ImportButton>Import CSV Data File</ImportButton>
            </UploadColumn>
          </UploadPanel>
          <BrokenImage><BrokenIcon /></BrokenImage>
        </Overlay>
      </Page>
      <FileDialog />
      <Tooltip role="tooltip">
        <div>Type: CSS File</div>
        <div>Size: 755 bytes</div>
        <div>Date modified: 3/31/2019 10:14 AM</div>
      </Tooltip>
    </Desktop>
  );
}
